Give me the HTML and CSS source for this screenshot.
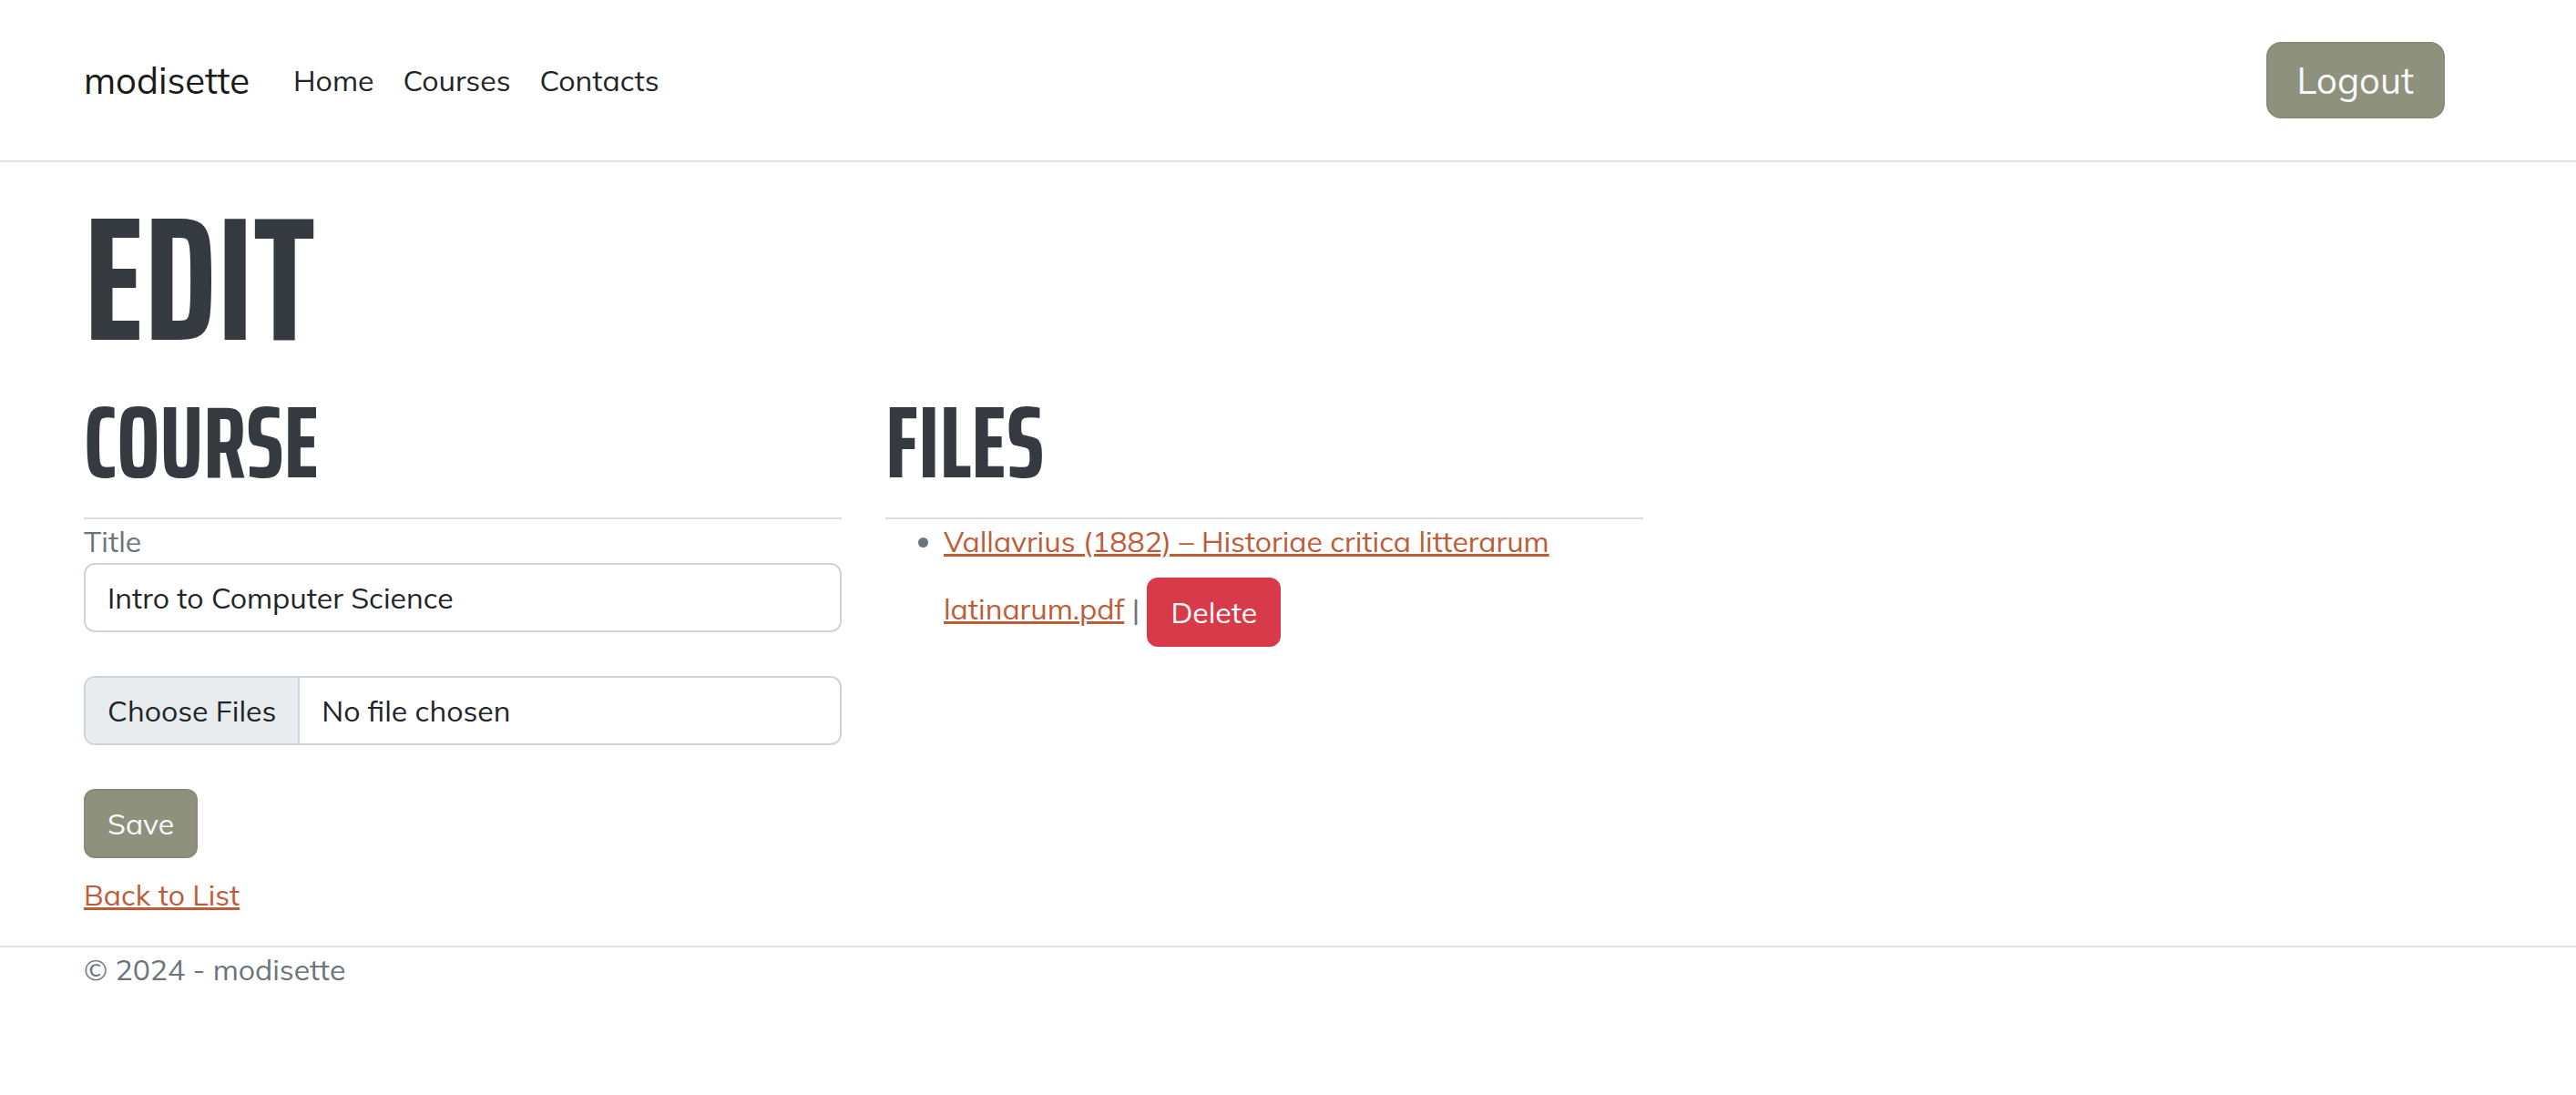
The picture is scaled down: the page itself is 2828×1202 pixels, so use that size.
FILE: index.html
```html
<!DOCTYPE html>
<html lang="en">
<head>
  <meta charset="utf-8">
  <meta name="viewport" content="width=device-width, initial-scale=1">
  <title>Edit - modisette</title>
  <link rel="stylesheet" href="styles.css">
</head>
<body>
  <header class="site-header">
    <nav class="navbar" aria-label="Main">
      <a class="navbar-brand" href="#">modisette</a>
      <ul class="navbar-nav">
        <li><a class="nav-link" href="#">Home</a></li>
        <li><a class="nav-link" href="#">Courses</a></li>
        <li><a class="nav-link" href="#">Contacts</a></li>
      </ul>
      <form class="logout-form">
        <button class="btn btn-primary btn-large" type="submit">Logout</button>
      </form>
    </nav>
  </header>

  <main class="page">
    <h1>Edit</h1>
    <div class="columns">
      <section>
        <h2>Course</h2>
        <hr>
        <form class="course-form">
          <div class="field">
            <label for="title">Title</label>
            <input class="form-control" id="title" type="text" value="Intro to Computer Science">
          </div>
          <input class="form-control form-file" type="file" aria-label="Course files" multiple>
          <button class="btn btn-primary" type="submit">Save</button>
        </form>
      </section>
      <section>
        <h2>Files</h2>
        <hr>
        <ul class="file-list">
          <li>
            <a href="#">Vallavrius (1882) – Historiae critica litterarum latinarum.pdf</a> |
            <button class="btn btn-danger" type="button">Delete</button>
          </li>
        </ul>
      </section>
    </div>
    <a class="back-link" href="#">Back to List</a>
  </main>

  <footer class="site-footer">&copy; 2024 - modisette</footer>
</body>
</html>
```
FILE: styles.css
```css
:root {
  --dark: #343a40;
  --text: #212529;
  --muted: #6c757d;
  --line: #dee2e6;
  --accent: #bd5d38;
  --olive: #8e927d;
}

* {
  box-sizing: border-box;
}

body {
  margin: 0;
  background: #fff;
  color: var(--muted);
  font-family: Mulish, Muli, Lato, sans-serif;
  font-size: 32px;
  line-height: 48px;
}

a {
  color: var(--accent);
  text-decoration-thickness: 3px;
}

button,
input {
  font: inherit;
}

h1,
h2 {
  margin: 0;
  color: var(--dark);
  font-family: "Saira ExtraCondensed", "Saira Extra Condensed", "Open Sans Condensed", sans-serif;
  font-weight: 700;
  text-transform: uppercase;
}

h1 {
  margin-bottom: 16px;
  font-size: 192px;
  line-height: 192px;
}

h2 {
  font-size: 112px;
  line-height: 134px;
}

hr {
  margin: 16px 0 0;
  border: 0;
  border-top: 2px solid #dcdcdc;
}

.site-header {
  padding: 46px 144px 46px 92px;
  border-bottom: 2px solid var(--line);
}

.navbar {
  display: flex;
  align-items: center;
}

.navbar-brand {
  margin-right: 32px;
  color: #1a1a1a;
  font-size: 40px;
  line-height: 60px;
  text-decoration: none;
}

.navbar-nav {
  display: flex;
  margin: 0;
  padding: 0;
  list-style: none;
}

.nav-link {
  padding: 16px;
  color: var(--text);
  text-decoration: none;
}

.logout-form {
  margin-left: auto;
}

.btn {
  display: inline-block;
  padding: 12px 24px;
  border: 2px solid;
  border-radius: 12px;
  vertical-align: middle;
  cursor: pointer;
}

.btn-primary {
  background: var(--olive);
  border-color: #8e8779;
  color: #f8f9fa;
}

.btn-danger {
  background: #d93a49;
  border-color: #d93a49;
  color: #fff;
}

.btn-large {
  padding: 10px 32px;
  border-radius: 16px;
  font-size: 40px;
  line-height: 60px;
}

.page {
  padding: 32px 144px 32px 92px;
}

.columns {
  display: grid;
  grid-template-columns: repeat(3, 1fr);
  gap: 48px;
}

.course-form {
  display: flex;
  flex-direction: column;
  align-items: flex-start;
  gap: 48px;
}

.field {
  width: 100%;
}

.field label {
  display: block;
}

.form-control {
  display: block;
  width: 100%;
  height: 76px;
  padding: 12px 24px;
  background: #fff;
  border: 2px solid #ced4da;
  border-radius: 12px;
  color: var(--text);
}

.form-file {
  overflow: hidden;
}

.form-file::file-selector-button {
  margin: -12px 24px -12px -24px;
  padding: 12px 24px;
  background: #e9ecef;
  border: 0 solid #ced4da;
  border-right-width: 2px;
  color: var(--text);
  font: inherit;
}

.file-list {
  margin: 0;
  padding-left: 64px;
}

.file-list .btn {
  margin: 16px 0;
}

.back-link {
  display: inline-block;
  margin-top: 16px;
}

.site-footer {
  padding: 0 144px 0 92px;
  border-top: 2px solid var(--line);
}
```
